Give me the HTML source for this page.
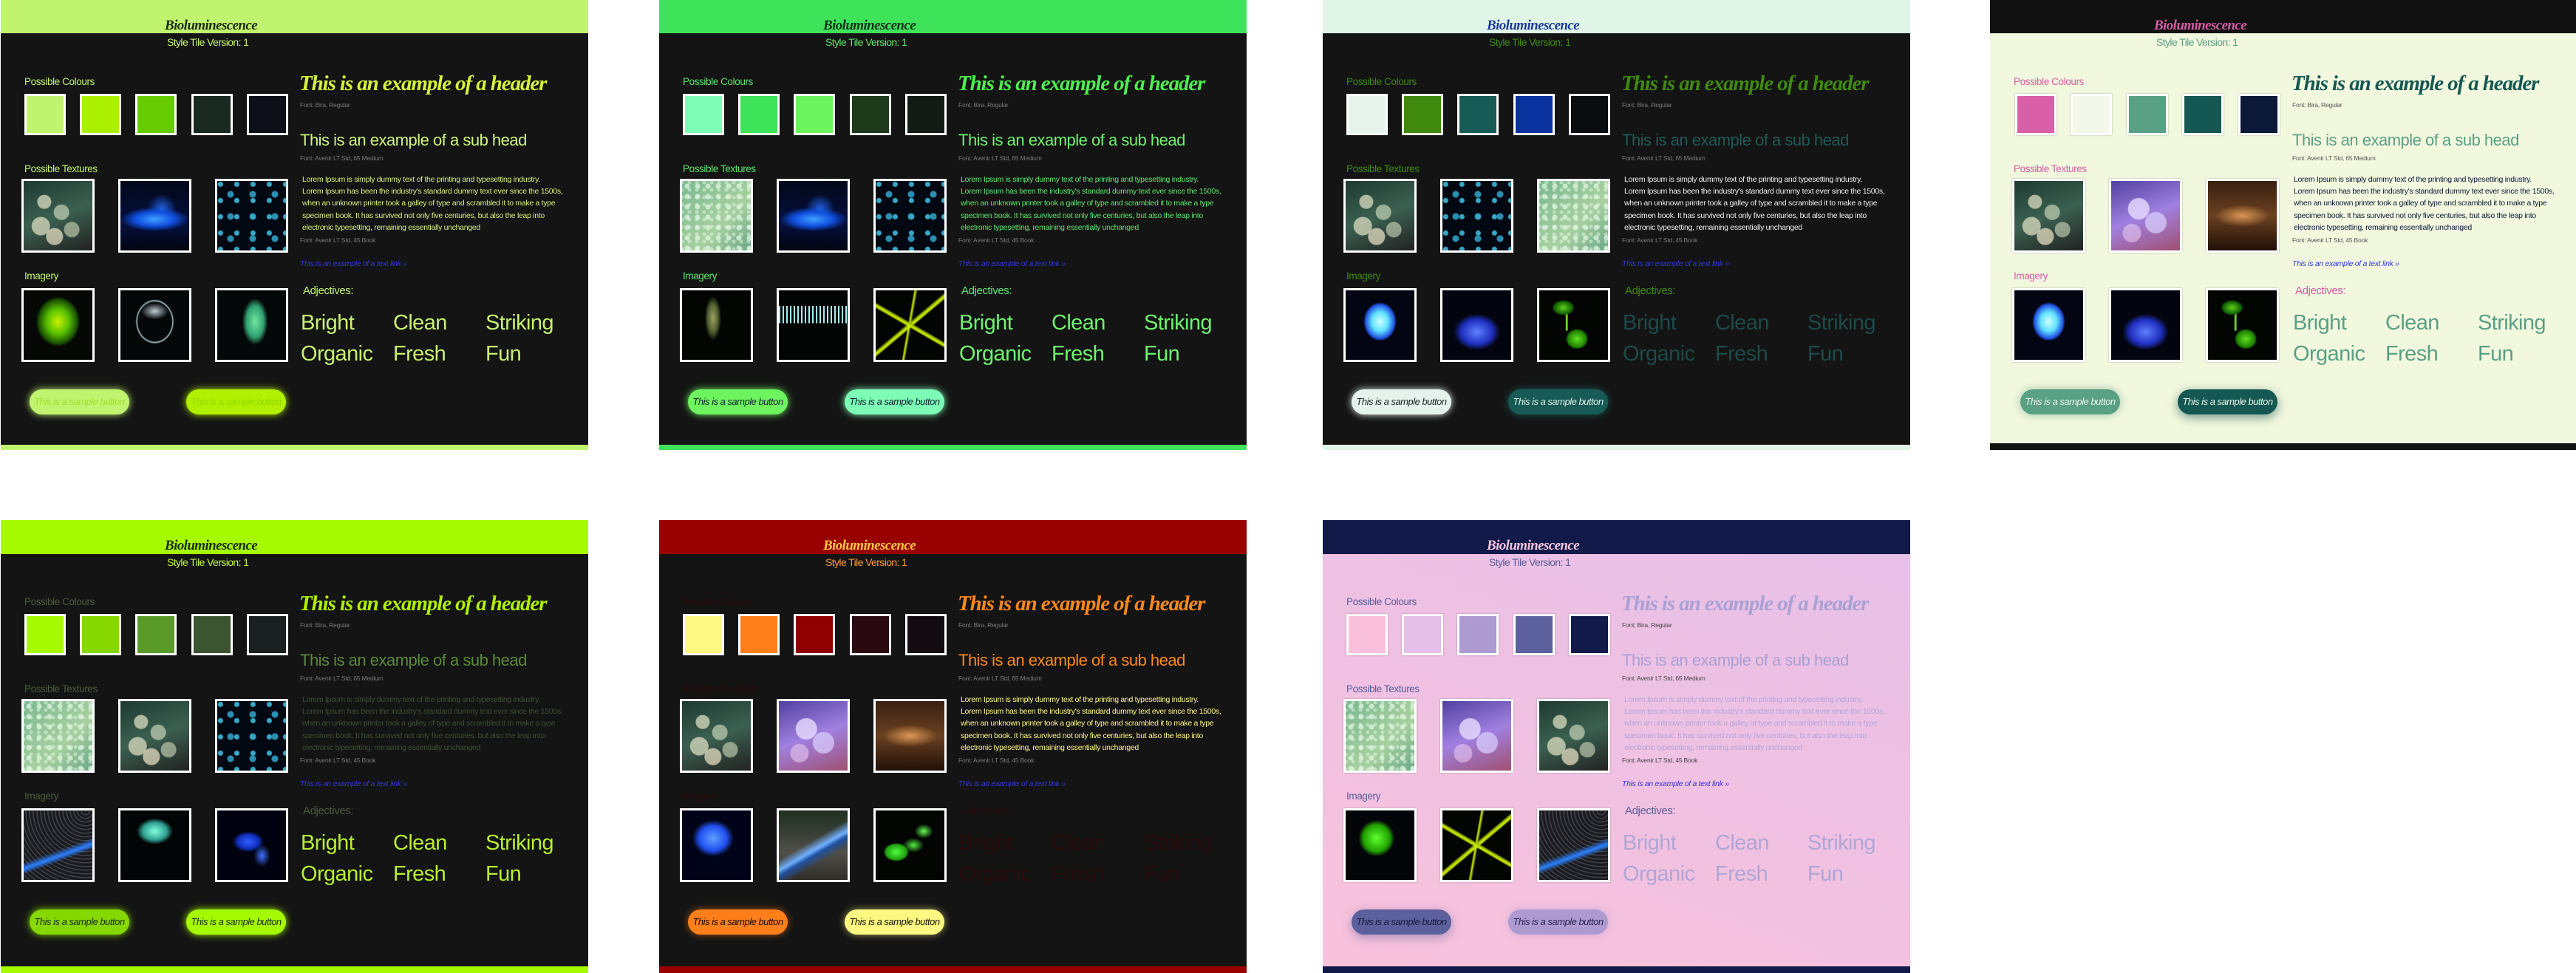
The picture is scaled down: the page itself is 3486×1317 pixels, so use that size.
<!DOCTYPE html>
<html><head><meta charset="utf-8"><style>
html,body{margin:0;padding:0;background:#fff;}
body{width:3486px;height:1317px;position:relative;overflow:hidden;}
.tile{position:absolute;width:795px;overflow:hidden;background:var(--bg);font-family:"Liberation Sans Narrow","Liberation Sans",sans-serif;}
.r1{top:0;height:609px}
.r2{top:704px;height:613px}
.band{position:absolute;left:0;top:0;width:100%;height:45px;background:var(--band)}
.foot{position:absolute;left:0;bottom:0;width:100%;height:7px;background:var(--band)}
.t{position:absolute;white-space:nowrap}
.title{left:222px;top:24px;font:italic bold 19px/22px "Liberation Serif",serif;color:var(--title);letter-spacing:-0.6px}
.ver{left:225px;top:49px;font-size:14px;line-height:16px;color:var(--ver);letter-spacing:-0.6px}
.lab{left:32px;font-size:13.5px;line-height:16px;color:var(--lab);letter-spacing:-0.4px}
.sw{position:absolute;top:127px;width:56px;height:56px;box-sizing:border-box;border:3px solid #fff;box-shadow:0 0 2px rgba(0,0,0,.3)}
.im{position:absolute;width:99px;height:100px;box-sizing:border-box;border:3px solid #fff;box-shadow:0 0 2px rgba(0,0,0,.3);background:#050808}
.btn{position:absolute;top:527px;width:135px;height:34px;border-radius:17px;text-align:center;font-style:italic;font-size:13px;line-height:34px;letter-spacing:-0.5px}
.hd{left:404px;top:96px;font:italic bold 29px/34px "Liberation Serif",serif;color:var(--hd);letter-spacing:-1.1px}
.note{left:405px;font-size:8.5px;line-height:10px;color:var(--note);letter-spacing:-0.2px}
.sub{left:405px;top:178px;font-size:22px;line-height:24px;color:var(--sub);letter-spacing:-0.5px}
.para{left:408px;top:235px;font-size:10.5px;line-height:16.2px;color:var(--para);letter-spacing:-0.3px}
.link{left:405px;top:351px;font-size:10.5px;line-height:12px;font-style:italic;color:#3535e0;letter-spacing:-0.3px}
.adjl{left:409px;top:385px;font-size:15px;line-height:18px;color:var(--lab2);letter-spacing:-0.4px}
.adj{font-size:29px;line-height:30px;color:var(--adj);letter-spacing:-0.6px}
.bokg{background:radial-gradient(circle at 30% 30%,rgba(230,230,200,.7) 0 9px,transparent 10px),radial-gradient(circle at 55% 45%,rgba(220,230,200,.6) 0 10px,transparent 11px),radial-gradient(circle at 25% 65%,rgba(230,230,200,.7) 0 12px,transparent 13px),radial-gradient(circle at 70% 70%,rgba(210,220,190,.6) 0 10px,transparent 11px),radial-gradient(circle at 45% 80%,rgba(240,230,200,.7) 0 11px,transparent 12px),linear-gradient(160deg,#1e3a32,#3b6050 50%,#222 100%)}
.bstr{background:radial-gradient(ellipse 70% 25% at 50% 55%,#3fa0ff 0,#1050e0 40%,transparent 70%),radial-gradient(ellipse 30% 30% at 60% 40%,#2060e0,transparent 70%),linear-gradient(180deg,#020718,#051040 60%,#020510)}
.bdot{background:radial-gradient(circle at 20% 20%,#36a8c8 0 3px,transparent 4px) 0 0/22px 22px,radial-gradient(circle at 60% 60%,#2a8fb0 0 4px,transparent 5px) 0 0/30px 30px,#020812}
.bub{background:radial-gradient(circle,rgba(230,250,230,.7) 0 3px,transparent 4px) 0 0/14px 14px,radial-gradient(circle,rgba(230,250,230,.5) 0 2px,transparent 3px) 5px 7px/10px 10px,linear-gradient(135deg,#7ab890,#a8d0a0 60%,#6aa888)}
.bokp{background:radial-gradient(circle at 40% 40%,rgba(230,220,255,.8) 0 14px,transparent 15px),radial-gradient(circle at 65% 60%,rgba(220,210,255,.7) 0 14px,transparent 15px),radial-gradient(circle at 30% 75%,rgba(230,200,240,.6) 0 12px,transparent 13px),linear-gradient(160deg,#5040a0,#a080e0 50%,#a05070)}
.boko{background:radial-gradient(ellipse 50% 20% at 50% 50%,rgba(230,160,90,.9),transparent 80%),linear-gradient(180deg,#3a2010,#6a4020 50%,#201008)}
.cor{background:radial-gradient(ellipse 40% 45% at 50% 45%,#c8f000 0,#58c000 40%,#1a5000 70%,transparent 80%),#050805}
.jelw{background:radial-gradient(ellipse 35% 40% at 50% 45%,transparent 70%,#a0b8c0 75%,transparent 80%),radial-gradient(ellipse 20% 12% at 50% 30%,#c0d0d8,transparent),#050808}
.gblob{background:radial-gradient(ellipse 25% 45% at 55% 45%,#70e8a0 0,#30a070 50%,transparent 75%),#050808}
.squid{background:radial-gradient(ellipse 15% 40% at 45% 40%,#a0a060,#506030 50%,transparent 80%),#030503}
.worm{background:repeating-linear-gradient(90deg,#a0f0f0 0 2px,transparent 2px 5px) 0 30%/100% 25% no-repeat,#030505}
.star{background:linear-gradient(30deg,transparent 47%,#d0f000 49%,#a0c000 51%,transparent 53%),linear-gradient(-40deg,transparent 47%,#d0f000 49%,#a0c000 51%,transparent 53%),linear-gradient(100deg,transparent 47%,#d0f000 49%,transparent 52%),#030503}
.jelc{background:radial-gradient(ellipse 30% 35% at 50% 45%,#d0ffff 0,#60e0ff 40%,#2050e0 70%,transparent 80%),#030512}
.urch{background:radial-gradient(ellipse 45% 35% at 50% 60%,#6080ff 0,#2030c0 50%,transparent 75%),#020410}
.mush{background:radial-gradient(ellipse 22% 20% at 55% 70%,#60e020,#208000 60%,transparent 75%),radial-gradient(ellipse 22% 15% at 35% 25%,#60d020,#106000 60%,transparent 75%),linear-gradient(90deg,transparent 38%,#70d030 39%,#70d030 41%,transparent 42%) 0 30%/100% 40% no-repeat,#030503}
.trail{background:linear-gradient(160deg,transparent 55%,#2a80ff 62%,transparent 68%),repeating-radial-gradient(circle at 90% 0,#404448 0 1px,#1a1a20 2px 5px)}
.jelt{background:radial-gradient(ellipse 35% 25% at 50% 30%,#80ffe0,#30a090 50%,transparent 75%),#020505}
.bfish{background:radial-gradient(ellipse 30% 20% at 45% 45%,#3060ff,#1030c0 50%,transparent 75%),radial-gradient(ellipse 15% 20% at 65% 65%,#4070ff,transparent 80%),#010210}
.jelb{background:radial-gradient(ellipse 40% 35% at 45% 40%,#60a0ff,#2050f0 50%,transparent 75%),#010418}
.beach{background:linear-gradient(150deg,transparent 45%,#70b0ff 55%,#2050a0 60%,transparent 70%),linear-gradient(180deg,#203020 0,#3a4038 35%,#505048 60%,#302c28)}
.gmush{background:radial-gradient(ellipse 25% 18% at 30% 60%,#50ff40,#20a010 60%,transparent 75%),radial-gradient(ellipse 18% 14% at 70% 30%,#60ff50,transparent 75%),radial-gradient(ellipse 20% 14% at 55% 50%,#50f040,transparent 75%),#030503}
.gcor2{background:radial-gradient(ellipse 35% 35% at 45% 40%,#60ff30,#20a000 55%,transparent 75%),#030508}
</style></head><body>

<!-- Tile 1 -->
<div class="tile r1" style="left:1px;--bg:#141414;--band:#c0f46e;--title:#1c2a10;--ver:#c8f56e;--lab:#c0f46e;--hd:#d6f53a;--note:#7a7a7a;--sub:#d0f57a;--para:#d8f07a;--lab2:#c0f46e;--adj:#c8f070">
<div class="band"></div><div class="foot"></div>
<div class="t title">Bioluminescence</div>
<div class="t ver">Style Tile Version: 1</div>
<div class="t lab" style="top:103px">Possible Colours</div>
<div class="sw" style="left:32px;background:#c0f46e"></div><div class="sw" style="left:107px;background:#aaf000"></div><div class="sw" style="left:182px;background:#66cc00"></div><div class="sw" style="left:258px;background:#1a2a22"></div><div class="sw" style="left:333px;background:#0d1018"></div>
<div class="t lab" style="top:221px">Possible Textures</div>
<div class="im bokg" style="left:28px;top:242px"></div><div class="im bstr" style="left:159px;top:242px"></div><div class="im bdot" style="left:290px;top:242px"></div>
<div class="t lab" style="top:366px">Imagery</div>
<div class="im cor" style="left:28px;top:390px"></div><div class="im jelw" style="left:159px;top:390px"></div><div class="im gblob" style="left:290px;top:390px"></div>
<div class="btn" style="left:39px;background:#c0f46e;color:#a0e030;box-shadow:0 0 10px #c0f46e">This is a sample button</div>
<div class="btn" style="left:251px;background:#b0f000;color:#98d800;box-shadow:0 0 10px #b0f000">This is a sample button</div>
<div class="t hd">This is an example of a header</div>
<div class="t note" style="top:137px">Font: Bira, Regular</div>
<div class="t sub">This is an example of a sub head</div>
<div class="t note" style="top:209px">Font: Avenir LT Std, 65 Medium</div>
<div class="t para">Lorem Ipsum is simply dummy text of the printing and typesetting industry.<br>Lorem Ipsum has been the industry's standard dummy text ever since the 1500s,<br>when an unknown printer took a galley of type and scrambled it to make a type<br>specimen book. It has survived not only five centuries, but also the leap into<br>electronic typesetting, remaining essentially unchanged</div>
<div class="t note" style="top:320px">Font: Avenir LT Std, 45 Book</div>
<div class="t link">This is an example of a text link »</div>
<div class="t adjl">Adjectives:</div>
<div class="t adj" style="left:406px;top:422px">Bright</div><div class="t adj" style="left:531px;top:422px">Clean</div><div class="t adj" style="left:656px;top:422px">Striking</div>
<div class="t adj" style="left:406px;top:464px">Organic</div><div class="t adj" style="left:531px;top:464px">Fresh</div><div class="t adj" style="left:656px;top:464px">Fun</div>
</div>

<!-- Tile 2 -->
<div class="tile r1" style="left:892px;--bg:#141414;--band:#3fe35a;--title:#10301a;--ver:#5de86c;--lab:#5de86c;--hd:#4ef050;--note:#7a7a7a;--sub:#6ef46e;--para:#5de86c;--lab2:#5de86c;--adj:#6ef46e">
<div class="band"></div><div class="foot"></div>
<div class="t title">Bioluminescence</div>
<div class="t ver">Style Tile Version: 1</div>
<div class="t lab" style="top:103px">Possible Colours</div>
<div class="sw" style="left:32px;background:#7dfcb5"></div><div class="sw" style="left:107px;background:#3fe35a"></div><div class="sw" style="left:182px;background:#6ef45e"></div><div class="sw" style="left:258px;background:#1d3a1a"></div><div class="sw" style="left:333px;background:#111a14"></div>
<div class="t lab" style="top:221px">Possible Textures</div>
<div class="im bub" style="left:28px;top:242px"></div><div class="im bstr" style="left:159px;top:242px"></div><div class="im bdot" style="left:290px;top:242px"></div>
<div class="t lab" style="top:366px">Imagery</div>
<div class="im squid" style="left:28px;top:390px"></div><div class="im worm" style="left:159px;top:390px"></div><div class="im star" style="left:290px;top:390px"></div>
<div class="btn" style="left:39px;background:#6ef45e;color:#123;box-shadow:0 0 10px #6ef45e">This is a sample button</div>
<div class="btn" style="left:251px;background:#7dfcb5;color:#123;box-shadow:0 0 10px #7dfcb5">This is a sample button</div>
<div class="t hd">This is an example of a header</div>
<div class="t note" style="top:137px">Font: Bira, Regular</div>
<div class="t sub">This is an example of a sub head</div>
<div class="t note" style="top:209px">Font: Avenir LT Std, 65 Medium</div>
<div class="t para">Lorem Ipsum is simply dummy text of the printing and typesetting industry.<br>Lorem Ipsum has been the industry's standard dummy text ever since the 1500s,<br>when an unknown printer took a galley of type and scrambled it to make a type<br>specimen book. It has survived not only five centuries, but also the leap into<br>electronic typesetting, remaining essentially unchanged</div>
<div class="t note" style="top:320px">Font: Avenir LT Std, 45 Book</div>
<div class="t link">This is an example of a text link »</div>
<div class="t adjl">Adjectives:</div>
<div class="t adj" style="left:406px;top:422px">Bright</div><div class="t adj" style="left:531px;top:422px">Clean</div><div class="t adj" style="left:656px;top:422px">Striking</div>
<div class="t adj" style="left:406px;top:464px">Organic</div><div class="t adj" style="left:531px;top:464px">Fresh</div><div class="t adj" style="left:656px;top:464px">Fun</div>
</div>

<!-- Tile 3 -->
<div class="tile r1" style="left:1790px;--bg:#141414;--band:#e0f5e8;--title:#1a3a9a;--ver:#3f8a0e;--lab:#3f8a0e;--hd:#3f8a0e;--note:#7a7a7a;--sub:#1f5a55;--para:#eeeeee;--lab2:#3f8a0e;--adj:#1d4a48">
<div class="band"></div><div class="foot"></div>
<div class="t title">Bioluminescence</div>
<div class="t ver">Style Tile Version: 1</div>
<div class="t lab" style="top:103px">Possible Colours</div>
<div class="sw" style="left:32px;background:#e6f2ec"></div><div class="sw" style="left:107px;background:#3f8a0e"></div><div class="sw" style="left:182px;background:#185a55"></div><div class="sw" style="left:258px;background:#0a33a0"></div><div class="sw" style="left:333px;background:#0a0d10"></div>
<div class="t lab" style="top:221px">Possible Textures</div>
<div class="im bokg" style="left:28px;top:242px"></div><div class="im bdot" style="left:159px;top:242px"></div><div class="im bub" style="left:290px;top:242px"></div>
<div class="t lab" style="top:366px">Imagery</div>
<div class="im jelc" style="left:28px;top:390px"></div><div class="im urch" style="left:159px;top:390px"></div><div class="im mush" style="left:290px;top:390px"></div>
<div class="btn" style="left:39px;background:#e6f2ec;color:#1a2a2a;box-shadow:0 0 10px #e6f2ec">This is a sample button</div>
<div class="btn" style="left:251px;background:#185a55;color:#d8f0e8;box-shadow:0 0 10px #185a55">This is a sample button</div>
<div class="t hd">This is an example of a header</div>
<div class="t note" style="top:137px">Font: Bira, Regular</div>
<div class="t sub">This is an example of a sub head</div>
<div class="t note" style="top:209px">Font: Avenir LT Std, 65 Medium</div>
<div class="t para">Lorem Ipsum is simply dummy text of the printing and typesetting industry.<br>Lorem Ipsum has been the industry's standard dummy text ever since the 1500s,<br>when an unknown printer took a galley of type and scrambled it to make a type<br>specimen book. It has survived not only five centuries, but also the leap into<br>electronic typesetting, remaining essentially unchanged</div>
<div class="t note" style="top:320px">Font: Avenir LT Std, 45 Book</div>
<div class="t link">This is an example of a text link »</div>
<div class="t adjl">Adjectives:</div>
<div class="t adj" style="left:406px;top:422px">Bright</div><div class="t adj" style="left:531px;top:422px">Clean</div><div class="t adj" style="left:656px;top:422px">Striking</div>
<div class="t adj" style="left:406px;top:464px">Organic</div><div class="t adj" style="left:531px;top:464px">Fresh</div><div class="t adj" style="left:656px;top:464px">Fun</div>
</div>

<!-- Tile 4 -->
<div class="tile r1" style="left:2693px;width:793px;--bg:#f2f8de;--band:#111111;--title:#d75aa5;--ver:#5a9e88;--lab:#d75aa5;--hd:#155752;--note:#555555;--sub:#5aa085;--para:#0c1838;--lab2:#d75aa5;--adj:#5aa085">
<div class="band"></div><div class="foot" style="height:9px"></div>
<div class="t title">Bioluminescence</div>
<div class="t ver">Style Tile Version: 1</div>
<div class="t lab" style="top:103px">Possible Colours</div>
<div class="sw" style="left:34px;background:#d95fa8"></div><div class="sw" style="left:109px;background:#f4f8ea"></div><div class="sw" style="left:185px;background:#5aa085"></div><div class="sw" style="left:260px;background:#155752"></div><div class="sw" style="left:336px;background:#0c1838"></div>
<div class="t lab" style="top:221px">Possible Textures</div>
<div class="im bokg" style="left:30px;top:242px"></div><div class="im bokp" style="left:161px;top:242px"></div><div class="im boko" style="left:292px;top:242px"></div>
<div class="t lab" style="top:366px">Imagery</div>
<div class="im jelc" style="left:30px;top:390px"></div><div class="im urch" style="left:161px;top:390px"></div><div class="im mush" style="left:292px;top:390px"></div>
<div class="btn" style="left:41px;background:#5aa085;color:#e8f4e8;box-shadow:0 0 12px rgba(90,160,133,.6)">This is a sample button</div>
<div class="btn" style="left:254px;background:#155752;color:#e8f4e8;box-shadow:0 4px 14px rgba(21,87,82,.6)">This is a sample button</div>
<div class="t hd" style="left:408px">This is an example of a header</div>
<div class="t note" style="top:137px;left:409px">Font: Bira, Regular</div>
<div class="t sub" style="left:409px">This is an example of a sub head</div>
<div class="t note" style="top:209px;left:409px">Font: Avenir LT Std, 65 Medium</div>
<div class="t para" style="left:411px">Lorem Ipsum is simply dummy text of the printing and typesetting industry.<br>Lorem Ipsum has been the industry's standard dummy text ever since the 1500s,<br>when an unknown printer took a galley of type and scrambled it to make a type<br>specimen book. It has survived not only five centuries, but also the leap into<br>electronic typesetting, remaining essentially unchanged</div>
<div class="t note" style="top:320px;left:409px">Font: Avenir LT Std, 45 Book</div>
<div class="t link" style="left:409px">This is an example of a text link »</div>
<div class="t adjl" style="left:413px">Adjectives:</div>
<div class="t adj" style="left:410px;top:422px">Bright</div><div class="t adj" style="left:535px;top:422px">Clean</div><div class="t adj" style="left:660px;top:422px">Striking</div>
<div class="t adj" style="left:410px;top:464px">Organic</div><div class="t adj" style="left:535px;top:464px">Fresh</div><div class="t adj" style="left:660px;top:464px">Fun</div>
</div>

<!-- Tile 5 -->
<div class="tile r2" style="left:1px;--bg:#141414;--band:#a6fa00;--title:#1c2a10;--ver:#c0f840;--lab:#4a5a3a;--hd:#b0f000;--note:#7a7a7a;--sub:#5a8a3a;--para:#3e4e34;--lab2:#4a5a3a;--adj:#b8f030">
<div class="band" style="height:46px"></div><div class="foot" style="height:9px"></div>
<div class="t title">Bioluminescence</div>
<div class="t ver">Style Tile Version: 1</div>
<div class="t lab" style="top:103px">Possible Colours</div>
<div class="sw" style="left:32px;background:#a6fa00"></div><div class="sw" style="left:107px;background:#86d800"></div><div class="sw" style="left:182px;background:#5a9a2a"></div><div class="sw" style="left:258px;background:#3a5530"></div><div class="sw" style="left:333px;background:#1a1f20"></div>
<div class="t lab" style="top:221px">Possible Textures</div>
<div class="im bub" style="left:28px;top:242px"></div><div class="im bokg" style="left:159px;top:242px"></div><div class="im bdot" style="left:290px;top:242px"></div>
<div class="t lab" style="top:366px">Imagery</div>
<div class="im trail" style="left:28px;top:390px"></div><div class="im jelt" style="left:159px;top:390px"></div><div class="im bfish" style="left:290px;top:390px"></div>
<div class="btn" style="left:39px;background:#86d800;color:#1a2a10;box-shadow:0 0 10px #86d800">This is a sample button</div>
<div class="btn" style="left:251px;background:#a6fa00;color:#1a2a10;box-shadow:0 0 10px #a6fa00">This is a sample button</div>
<div class="t hd">This is an example of a header</div>
<div class="t note" style="top:137px">Font: Bira, Regular</div>
<div class="t sub">This is an example of a sub head</div>
<div class="t note" style="top:209px">Font: Avenir LT Std, 65 Medium</div>
<div class="t para">Lorem Ipsum is simply dummy text of the printing and typesetting industry.<br>Lorem Ipsum has been the industry's standard dummy text ever since the 1500s,<br>when an unknown printer took a galley of type and scrambled it to make a type<br>specimen book. It has survived not only five centuries, but also the leap into<br>electronic typesetting, remaining essentially unchanged</div>
<div class="t note" style="top:320px">Font: Avenir LT Std, 45 Book</div>
<div class="t link">This is an example of a text link »</div>
<div class="t adjl">Adjectives:</div>
<div class="t adj" style="left:406px;top:422px">Bright</div><div class="t adj" style="left:531px;top:422px">Clean</div><div class="t adj" style="left:656px;top:422px">Striking</div>
<div class="t adj" style="left:406px;top:464px">Organic</div><div class="t adj" style="left:531px;top:464px">Fresh</div><div class="t adj" style="left:656px;top:464px">Fun</div>
</div>

<!-- Tile 6 -->
<div class="tile r2" style="left:892px;--bg:#141414;--band:#990000;--title:#ffc840;--ver:#ff9a30;--lab:#2a0c0c;--hd:#ff8a1a;--note:#7a7a7a;--sub:#ff8a1a;--para:#fdf882;--lab2:#2a0c0c;--adj:#2a0c0e">
<div class="band" style="height:46px"></div><div class="foot" style="height:9px"></div>
<div class="t title">Bioluminescence</div>
<div class="t ver">Style Tile Version: 1</div>
<div class="t lab" style="top:103px">Possible Colours</div>
<div class="sw" style="left:32px;background:#fdf882"></div><div class="sw" style="left:107px;background:#ff7f1a"></div><div class="sw" style="left:182px;background:#900000"></div><div class="sw" style="left:258px;background:#2a0a10"></div><div class="sw" style="left:333px;background:#120c10"></div>
<div class="t lab" style="top:221px">Possible Textures</div>
<div class="im bokg" style="left:28px;top:242px"></div><div class="im bokp" style="left:159px;top:242px"></div><div class="im boko" style="left:290px;top:242px"></div>
<div class="t lab" style="top:366px">Imagery</div>
<div class="im jelb" style="left:28px;top:390px"></div><div class="im beach" style="left:159px;top:390px"></div><div class="im gmush" style="left:290px;top:390px"></div>
<div class="btn" style="left:39px;background:#ff7f1a;color:#1a0a05;box-shadow:0 0 10px rgba(255,127,26,.6)">This is a sample button</div>
<div class="btn" style="left:251px;background:#fdf882;color:#1a1a05;box-shadow:0 0 10px rgba(253,248,130,.6)">This is a sample button</div>
<div class="t hd">This is an example of a header</div>
<div class="t note" style="top:137px">Font: Bira, Regular</div>
<div class="t sub">This is an example of a sub head</div>
<div class="t note" style="top:209px">Font: Avenir LT Std, 65 Medium</div>
<div class="t para">Lorem Ipsum is simply dummy text of the printing and typesetting industry.<br>Lorem Ipsum has been the industry's standard dummy text ever since the 1500s,<br>when an unknown printer took a galley of type and scrambled it to make a type<br>specimen book. It has survived not only five centuries, but also the leap into<br>electronic typesetting, remaining essentially unchanged</div>
<div class="t note" style="top:320px">Font: Avenir LT Std, 45 Book</div>
<div class="t link">This is an example of a text link »</div>
<div class="t adjl">Adjectives:</div>
<div class="t adj" style="left:406px;top:422px">Bright</div><div class="t adj" style="left:531px;top:422px">Clean</div><div class="t adj" style="left:656px;top:422px">Striking</div>
<div class="t adj" style="left:406px;top:464px">Organic</div><div class="t adj" style="left:531px;top:464px">Fresh</div><div class="t adj" style="left:656px;top:464px">Fun</div>
</div>

<!-- Tile 7 -->
<div class="tile r2" style="left:1790px;--bg:linear-gradient(200deg,#e6c0e8,#f9c2dc);--band:#111a48;--title:#f7c4e0;--ver:#5a5e9a;--lab:#5a5e9a;--hd:#a9a0d4;--note:#444444;--sub:#a9a0d4;--para:#b5a6d8;--lab2:#5a5e9a;--adj:#b0a6d6">
<div class="band" style="height:46px"></div><div class="foot" style="height:9px"></div>
<div class="t title">Bioluminescence</div>
<div class="t ver">Style Tile Version: 1</div>
<div class="t lab" style="top:103px">Possible Colours</div>
<div class="sw" style="left:32px;background:#fbc0dc"></div><div class="sw" style="left:107px;background:#e6bfe8"></div><div class="sw" style="left:182px;background:#ad9ad0"></div><div class="sw" style="left:258px;background:#5c609c"></div><div class="sw" style="left:333px;background:#111a48"></div>
<div class="t lab" style="top:221px">Possible Textures</div>
<div class="im bub" style="left:28px;top:242px"></div><div class="im bokp" style="left:159px;top:242px"></div><div class="im bokg" style="left:290px;top:242px"></div>
<div class="t lab" style="top:366px">Imagery</div>
<div class="im gcor2" style="left:28px;top:390px"></div><div class="im star" style="left:159px;top:390px"></div><div class="im trail" style="left:290px;top:390px"></div>
<div class="btn" style="left:39px;background:#5c609c;color:#1a1a40;box-shadow:0 4px 14px rgba(92,96,156,.5)">This is a sample button</div>
<div class="btn" style="left:251px;background:#ad9ad0;color:#2a2a50;box-shadow:0 0 10px rgba(173,154,208,.5)">This is a sample button</div>
<div class="t hd">This is an example of a header</div>
<div class="t note" style="top:137px">Font: Bira, Regular</div>
<div class="t sub">This is an example of a sub head</div>
<div class="t note" style="top:209px">Font: Avenir LT Std, 65 Medium</div>
<div class="t para">Lorem Ipsum is simply dummy text of the printing and typesetting industry.<br>Lorem Ipsum has been the industry's standard dummy text ever since the 1500s,<br>when an unknown printer took a galley of type and scrambled it to make a type<br>specimen book. It has survived not only five centuries, but also the leap into<br>electronic typesetting, remaining essentially unchanged</div>
<div class="t note" style="top:320px">Font: Avenir LT Std, 45 Book</div>
<div class="t link">This is an example of a text link »</div>
<div class="t adjl">Adjectives:</div>
<div class="t adj" style="left:406px;top:422px">Bright</div><div class="t adj" style="left:531px;top:422px">Clean</div><div class="t adj" style="left:656px;top:422px">Striking</div>
<div class="t adj" style="left:406px;top:464px">Organic</div><div class="t adj" style="left:531px;top:464px">Fresh</div><div class="t adj" style="left:656px;top:464px">Fun</div>
</div>

</body></html>
